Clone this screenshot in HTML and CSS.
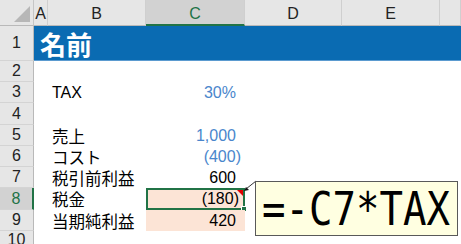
FILE: index.html
```html
<!DOCTYPE html>
<html lang="ja">
<head>
    <meta charset="UTF-8">
    <title>税金</title>
    <link rel="stylesheet" href="styles.css">
</head>
<body>
    <div class="sheet">
        <div class="corner"><span class="tri"></span></div>
        <div class="colhead">A</div>
        <div class="colhead">B</div>
        <div class="colhead active">C</div>
        <div class="colhead">D</div>
        <div class="colhead">E</div>
        <div class="colhead"></div>

        <div class="rowhead">1</div>
        <div class="title">名前</div>

        <div class="rowhead">2</div>
        <div class="blank"></div>

        <div class="rowhead">3</div>
        <div class="cell"></div>
        <div class="cell label">TAX</div>
        <div class="cell num input">30%</div>
        <div class="rest"></div>

        <div class="rowhead">4</div>
        <div class="blank"></div>

        <div class="rowhead">5</div>
        <div class="cell"></div>
        <div class="cell label jp">売上</div>
        <div class="cell num input">1,000</div>
        <div class="rest"></div>

        <div class="rowhead">6</div>
        <div class="cell"></div>
        <div class="cell label jp">コスト</div>
        <div class="cell num input neg">(400)</div>
        <div class="rest"></div>

        <div class="rowhead">7</div>
        <div class="cell"></div>
        <div class="cell label jp">税引前利益</div>
        <div class="cell num">600</div>
        <div class="rest"></div>

        <div class="rowhead active">8</div>
        <div class="cell"></div>
        <div class="cell label jp">税金</div>
        <div class="cell num neg peach selected">(180)<span class="note-mark"></span><span class="handle"></span></div>
        <div class="rest"></div>

        <div class="rowhead">9</div>
        <div class="cell"></div>
        <div class="cell label jp">当期純利益</div>
        <div class="cell num peach">420</div>
        <div class="rest"></div>

        <div class="rowhead">10</div>
        <div class="blank"></div>
    </div>

    <svg class="pointer" width="16" height="14" viewBox="0 0 16 14">
        <line x1="13" y1="1" x2="3" y2="9" stroke="#333" stroke-width="1"/>
        <polygon points="1,11 6,10 3,7" fill="#111"/>
    </svg>
    <div class="comment"><span class="formula">=-C7*TAX</span></div>
</body>
</html>
```

FILE: styles.css
```css
* {
    margin: 0;
    padding: 0;
    box-sizing: border-box;
}

body {
    width: 461px;
    height: 244px;
    overflow: hidden;
    background: #fff;
    font-family: "Liberation Sans", "Noto Sans CJK JP", sans-serif;
    font-size: 16px;
    color: #000;
    position: relative;
}

.sheet {
    display: grid;
    grid-template-columns: 34px 14px 98px 99px 97px 98px 1fr;
    grid-template-rows: 26px 35px 21px 21px 22px 21px 21px 21px 22px 21px 1fr;
}

.corner {
    background: #e6e6e6;
    border-right: 1px solid #c6c6c6;
    border-bottom: 1px solid #b9b9b9;
    position: relative;
}

.tri {
    position: absolute;
    right: 3px;
    bottom: 3px;
    width: 0;
    height: 0;
    border-left: 16px solid transparent;
    border-bottom: 16px solid #b7b7b7;
}

.colhead {
    background: #e6e6e6;
    border-right: 1px solid #cfcfcf;
    border-bottom: 1px solid #b9b9b9;
    display: flex;
    align-items: center;
    justify-content: center;
    padding-top: 3px;
    color: #222;
}

.colhead.active {
    background: #d2d2d2;
    color: #217346;
    border-bottom: 2px solid #217346;
}

.rowhead {
    background: #e6e6e6;
    border-right: 1px solid #b9b9b9;
    border-bottom: 1px solid #d4d4d4;
    display: flex;
    align-items: center;
    justify-content: center;
    color: #222;
}

.rowhead.active {
    background: #d2d2d2;
    color: #217346;
    border-right: 2px solid #217346;
}

.title {
    grid-column: 2 / -1;
    background: #0a6bb2;
    color: #fff;
    font-family: "Noto Sans CJK JP", sans-serif;
    font-weight: bold;
    font-size: 26px;
    display: flex;
    align-items: center;
    padding-left: 6px;
    border-bottom: 1px solid #5b9bd0;
}

.blank {
    grid-column: 2 / -1;
}

.rest {
    grid-column: 5 / -1;
}

.cell {
    display: flex;
    align-items: center;
    white-space: nowrap;
}

.label {
    padding-left: 4px;
}

.label.jp {
    font-size: 16.5px;
}

.num {
    justify-content: flex-end;
    padding-right: 9px;
    position: relative;
}

.num.neg {
    padding-right: 4px;
}

.input {
    color: #4a86cc;
}

.peach {
    background: #fce4d6;
}

.selected {
    border: 2px solid #217346;
    padding-right: 2px;
}

.note-mark {
    position: absolute;
    top: 0;
    right: 0;
    width: 0;
    height: 0;
    border-left: 6px solid transparent;
    border-top: 6px solid #e00000;
}

.handle {
    position: absolute;
    right: -4px;
    bottom: -4px;
    width: 6px;
    height: 6px;
    background: #217346;
    border: 1px solid #fff;
}

.pointer {
    position: absolute;
    left: 243px;
    top: 180px;
}

.comment {
    position: absolute;
    left: 255px;
    top: 181px;
    width: 203px;
    height: 55px;
    background: #ffffe1;
    border: 1px solid #595959;
    overflow: hidden;
    white-space: nowrap;
}

.formula {
    display: inline-block;
    white-space: nowrap;
    font-family: "DejaVu Sans Mono", monospace;
    font-size: 47px;
    line-height: 53px;
    transform: scaleX(0.83);
    transform-origin: left center;
    margin-left: 6px;
    color: #000;
}
```
